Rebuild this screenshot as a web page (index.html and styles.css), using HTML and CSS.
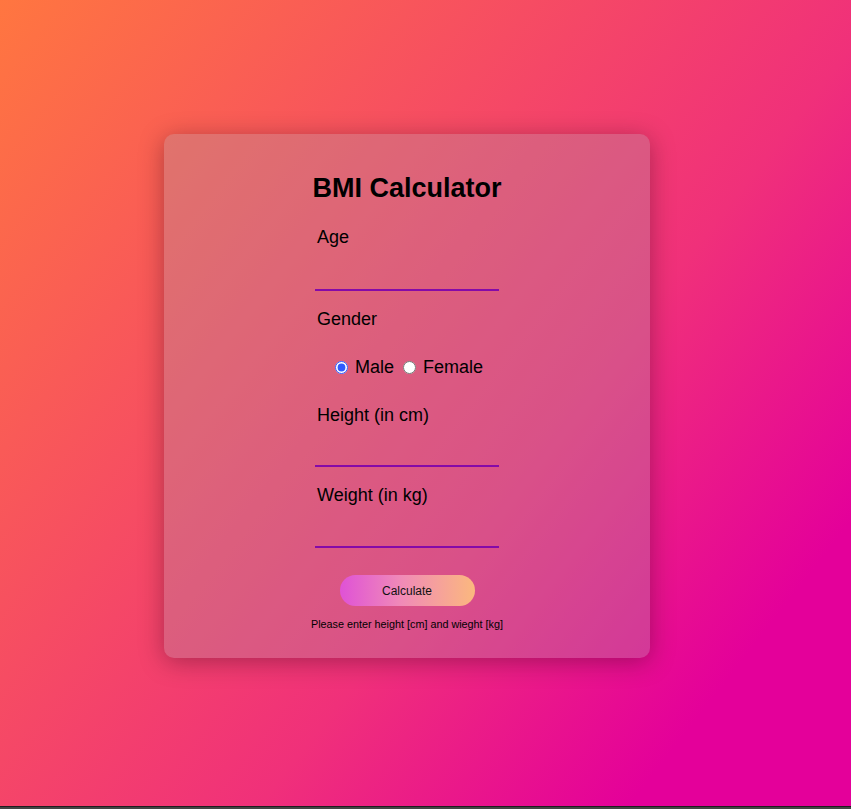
FILE: index.html
```html
<!DOCTYPE html>
<html lang="en">
<head>
<meta charset="utf-8">
<title>BMI Calculator</title>
<link rel="stylesheet" href="styles.css">
</head>
<body>
<div class="page">
  <div class="card">
    <h1 class="title">BMI Calculator</h1>
    <div class="form">
      <label class="label" for="age">Age</label>
      <input class="field field-age" id="age" type="text">
      <div class="label label-gap">Gender</div>
      <div class="radios">
        <input class="radio" type="radio" name="g" id="male" checked>
        <label class="radio-text" for="male">Male</label>
        <input class="radio radio-second" type="radio" name="g" id="female">
        <label class="radio-text" for="female">Female</label>
      </div>
      <label class="label label-after-radio" for="height">Height (in cm)</label>
      <input class="field field-height" id="height" type="text">
      <label class="label label-gap" for="weight">Weight (in kg)</label>
      <input class="field field-weight" id="weight" type="text">
    </div>
    <button class="btn" type="button">Calculate</button>
    <p class="note">Please enter height [cm] and wieght [kg]</p>
  </div>
</div>
<div class="bottom-strip"></div>
</body>
</html>
```

FILE: styles.css
```css
html, body {
  margin: 0;
  padding: 0;
  background: #3c3c3c;
}

body {
  font-family: "Liberation Sans", Arial, sans-serif;
  color: #000;
}

.page {
  height: 806px;
  box-sizing: border-box;
  padding: 134px 0 0 164px;
  background: linear-gradient(128deg, #ff7640 0%, #f0307a 60%, #e4009a 85%, #e4009a 100%);
  overflow: hidden;
}

.bottom-strip {
  height: 2px;
  border-top: 1px solid #1e1e1e;
  background: #444;
}

.card {
  width: 486px;
  height: 524px;
  box-sizing: border-box;
  padding: 39px 0 27px;
  border-radius: 10px;
  background: rgba(165, 160, 170, 0.3);
  box-shadow: 0 4px 24px rgba(40, 0, 20, 0.35);
  display: flex;
  flex-direction: column;
  align-items: center;
}

.title {
  margin: 0 0 23px;
  font-size: 27px;
  line-height: 31px;
  font-weight: bold;
  text-align: center;
}

.form {
  width: 184px;
  display: flex;
  flex-direction: column;
}

.label {
  display: block;
  font-size: 18px;
  line-height: 21px;
  padding-left: 2px;
}

.label-gap {
  margin-top: 18px;
}

.label-after-radio {
  margin-top: 27px;
}

.field {
  display: block;
  width: 184px;
  height: 33px;
  box-sizing: border-box;
  border: none;
  border-bottom: 2px solid #850aa8;
  background: transparent;
  outline: none;
  padding: 0 2px;
  font-size: 16px;
  font-family: inherit;
}

.field-age { margin-top: 10px; }
.field-height { margin-top: 8px; }
.field-weight { margin-top: 9px; }

.radios {
  margin-top: 27px;
  height: 21px;
  display: flex;
  align-items: center;
  padding-left: 20px;
}

.radio {
  width: 13px;
  height: 13px;
  margin: 0 7px 0 0;
  accent-color: #2f5bff;
}

.radio-second {
  margin-left: 9px;
}

.radio-text {
  font-size: 18px;
  line-height: 21px;
}

.btn {
  margin-top: 27px;
  width: 135px;
  height: 31px;
  border: none;
  border-radius: 16px;
  background: linear-gradient(90deg, #df52d6 0%, #f08ab8 45%, #fbb87e 100%);
  font-family: inherit;
  font-size: 12px;
  color: #111;
  padding: 0;
}

.note {
  margin: 12px 0 0;
  font-size: 10.8px;
  line-height: 13px;
  text-align: center;
}
```
